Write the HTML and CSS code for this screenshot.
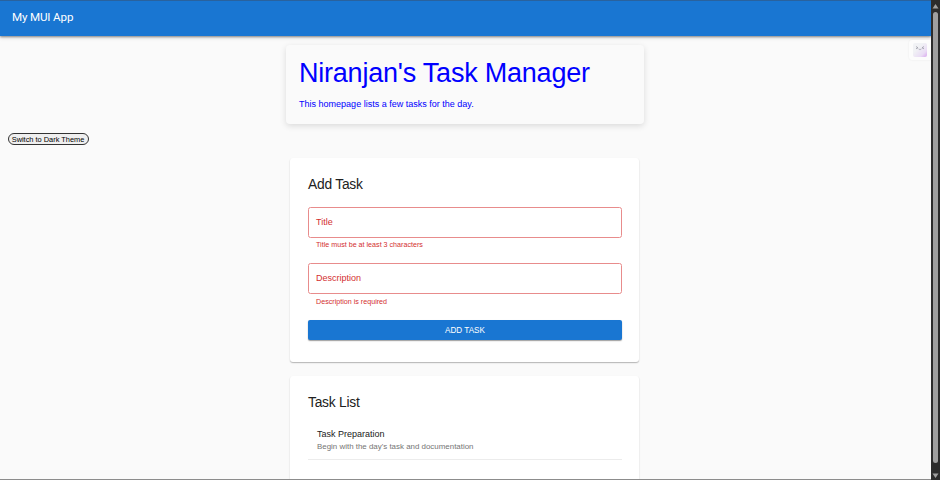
FILE: index.html
```html
<!DOCTYPE html>
<html lang="en">
<head>
<meta charset="utf-8">
<title>My MUI App</title>
<link rel="stylesheet" href="styles.css">
</head>
<body>
<div class="window">
  <div class="page">
    <header class="app-bar"><span class="app-title">My MUI App</span></header>
    <div class="extension">
      <svg width="14" height="14" viewBox="0 0 14 14">
        <defs><linearGradient id="tile" x1="0" y1="0" x2="1" y2="1"><stop offset="0.35" stop-color="#f1f2f5"/><stop offset="0.75" stop-color="#eadcf5"/><stop offset="1" stop-color="#d9a8ee"/></linearGradient></defs>
        <rect width="14" height="14" rx="2" fill="url(#tile)"/>
        <path d="M3 3.5l2 1.3-2 1M11 3.5L9 4.8l2 1M5.6 6q.7 1 1.4 0 .7 1 1.4 0" fill="none" stroke="#9a9ca6" stroke-width=".8"/>
      </svg>
    </div>
    <section class="hero">
      <h1>Niranjan's Task Manager</h1>
      <p>This homepage lists a few tasks for the day.</p>
    </section>
    <button class="theme-toggle">Switch to Dark Theme</button>
    <main class="content">
      <section class="card form-card">
        <h2>Add Task</h2>
        <div class="field"><span>Title</span></div>
        <p class="helper">Title must be at least 3 characters</p>
        <div class="field"><span>Description</span></div>
        <p class="helper">Description is required</p>
        <button class="submit">ADD TASK</button>
      </section>
      <section class="card list-card">
        <h2>Task List</h2>
        <div class="task">
          <div class="task-title">Task Preparation</div>
          <div class="task-text">Begin with the day's task and documentation</div>
        </div>
      </section>
    </main>
  </div>
  <aside class="scrollbar">
    <svg width="7" height="5" viewBox="0 0 7 5"><path d="M3.5 0L6.5 4.5H.5z" fill="#9f9f9f"/></svg>
    <div class="thumb"></div>
    <svg width="7" height="5" viewBox="0 0 7 5"><path d="M.5 .5h6L3.5 5z" fill="#9f9f9f"/></svg>
  </aside>
</div>
</body>
</html>
```
FILE: styles.css
```css
* { box-sizing: border-box; }
body {
  margin: 0;
  font-family: "Liberation Sans", Arial, sans-serif;
  color: #212121;
  overflow: hidden;
}
h1, h2, p { margin: 0; font-weight: 400; }
.window {
  display: flex;
  width: 940px;
  height: 480px;
  overflow: hidden;
}
.page {
  position: relative;
  width: 931px;
  height: 480px;
  overflow: hidden;
  background: #fafafa;
  border-bottom: 1px solid #8c8c8c;
}
.app-bar {
  height: 36px;
  padding-left: 12px;
  border-top: 1px solid #29629e;
  background: #1976d2;
  box-shadow: 0 1px 2px rgba(0, 0, 0, .4), 0 2px 4px rgba(0, 0, 0, .12);
  color: #fff;
}
.app-title {
  display: block;
  font: 400 11.6px/33px Roboto, sans-serif;
  letter-spacing: -.15px;
}
.extension {
  position: absolute;
  top: 40px;
  right: 0;
  width: 22px;
  height: 20px;
  padding: 3px 0 0 4px;
  border-radius: 3px 0 0 3px;
  background: #fcfcfc;
  box-shadow: 0 0 2px rgba(0, 0, 0, .08);
}
.extension svg { display: block; }
.hero {
  width: 358px;
  height: 79px;
  margin: 9px 0 0 286px;
  padding: 13px 13px 0;
  border-radius: 4px;
  background: #fafafa;
  box-shadow: 0 2px 6px rgba(0, 0, 0, .13);
  color: #0000ff;
  white-space: nowrap;
}
.hero h1 { font-size: 27px; line-height: 31px; letter-spacing: -.22px; }
.hero p { margin-top: 9px; font-size: 9.03px; line-height: 13px; }
.theme-toggle {
  display: block;
  width: 81px;
  height: 12px;
  margin: 9px 0 0 7.5px;
  padding: 0;
  border: 1px solid #333;
  border-radius: 6px;
  background: #efefef;
  color: #000;
  font: 7.4px/9px "Liberation Sans", Arial, sans-serif;
  white-space: nowrap;
}
.content { width: 349px; margin: 13px 0 0 290px; }
.card {
  padding: 19px 17px 0 18px;
  border-radius: 3px;
  background: #fff;
  box-shadow: 0 1px 1px rgba(0, 0, 0, .2), 0 1px 2px rgba(0, 0, 0, .1);
}
.form-card { height: 204px; }
.list-card { height: 130px; margin-top: 14px; }
.card h2 { font-size: 13.8px; line-height: 16px; letter-spacing: -.23px; }
.field {
  height: 31px;
  margin-top: 14px;
  padding-left: 7px;
  border: 1px solid #e88c8c;
  border-radius: 2.5px;
  color: #d32f2f;
  font-size: 9px;
  line-height: 28px;
}
.helper {
  margin: 2px 0 0 8px;
  color: #d32f2f;
  font-size: 7.15px;
  line-height: 10px;
}
.helper + .field { margin-top: 13px; }
.field + .helper:nth-of-type(2) { margin-top: 3px; }
.submit {
  display: block;
  width: 100%;
  height: 20px;
  margin-top: 13px;
  padding: 1px 0 0;
  border: 0;
  border-radius: 2px;
  background: #1976d2;
  box-shadow: 0 1px 1px rgba(0, 0, 0, .3), 0 1px 2px rgba(0, 0, 0, .12);
  color: #fff;
  font: 8.15px/19px "Liberation Sans", Arial, sans-serif;
}
.task {
  height: 37px;
  margin-top: 12px;
  padding: 5px 0 0 9px;
  border-bottom: 1px solid #ececec;
}
.task-title { font-size: 9px; line-height: 13px; }
.task-text { color: #757575; font-size: 7.93px; line-height: 11px; }
.scrollbar {
  display: flex;
  flex-direction: column;
  align-items: center;
  width: 9px;
  padding: 4px 0 2px;
  background: #2c2c2c;
}
.thumb {
  width: 5px;
  height: 451px;
  margin: 3px 0 10px;
  border-radius: 3px;
  background: #9f9f9f;
}
```
